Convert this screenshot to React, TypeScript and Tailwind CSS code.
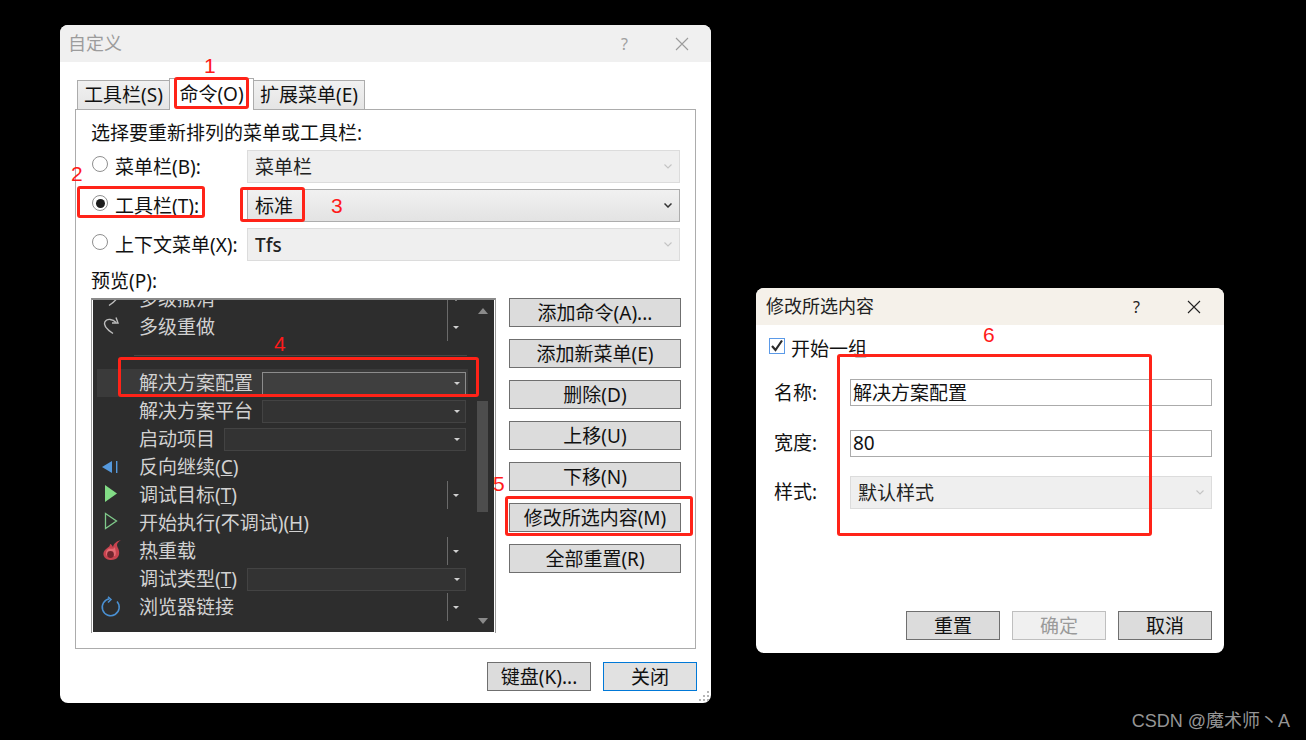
import type { ReactNode } from "react";

const redBox = "absolute border-[3px] border-[#ff2318] rounded-[3px] pointer-events-none z-20";
const redNum = "absolute text-[21px] leading-none text-[#ff1a1a] font-['Liberation_Sans',sans-serif] z-20";

function Chevron({ dim }: { dim?: boolean }) {
  return (
    <svg width="8" height="5" viewBox="0 0 8 5" fill="none">
      <path d="M0.5 0.5 L4 4 L7.5 0.5" stroke={dim ? "#c4c4c4" : "#333333"} strokeWidth={dim ? 1.1 : 1.5} />
    </svg>
  );
}

function Select({ text, enabled, bold }: { text: string; enabled?: boolean; bold?: boolean }) {
  return (
    <div
      className={`h-[33px] flex items-center justify-between pl-[7px] pr-[7px] border ${
        enabled
          ? "border-[#adadad] bg-gradient-to-b from-[#f1f1f1] to-[#e3e3e3] text-[#111]"
          : "border-[#dcdcdc] bg-[#efefef] text-[#222]"
      } ${bold ? "font-medium text-[#111]" : ""}`}
    >
      <span className="pt-[2px]">{text}</span>
      <Chevron dim={!enabled} />
    </div>
  );
}

function Radio({ checked }: { checked?: boolean }) {
  return (
    <span className="w-[16px] h-[16px] rounded-full border border-[#8f8f8f] bg-white flex items-center justify-center mb-[5px] ml-px shrink-0">
      {checked && <span className="w-[9px] h-[9px] rounded-full bg-[#1c1c1c]" />}
    </span>
  );
}

function OptionRow({ label, checked, select }: { label: string; checked?: boolean; select: ReactNode }) {
  return (
    <div className="grid grid-cols-[156px_433px] items-center">
      <div className="flex items-center">
        <Radio checked={checked} />
        <span className="ml-[7px] pt-[2px] whitespace-nowrap">{label}</span>
      </div>
      {select}
    </div>
  );
}

function Btn({ children, w = "w-[172px]", accent, off }: { children: ReactNode; w?: string; accent?: boolean; off?: boolean }) {
  return (
    <button
      className={`${w} h-[29px] pt-[2px] flex items-center justify-center border leading-none ${
        accent
          ? "border-[#0078d7] bg-[#e1e1e1] text-[#111]"
          : off
          ? "border-[#bfbfbf] bg-[#f0f0f0] text-[#9a9a9a]"
          : "border-[#6f6f6f] bg-[#dcdcdc] text-[#111]"
      }`}
    >
      {children}
    </button>
  );
}

const RedoIcon = () => (
  <svg width="22" height="22" viewBox="0 0 22 22" fill="none" stroke="#bdbdbd" strokeWidth="1.4">
    <path d="M16 6.5 C13 3 7 2 4.8 6 C3 9.5 7 13.5 13 17.5" />
    <path d="M16 1.5 L18 7 L12 7" />
  </svg>
);

const UndoIcon = () => (
  <svg width="22" height="22" viewBox="0 0 22 22" fill="none" stroke="#bdbdbd" strokeWidth="1.4">
    <path d="M6 6.5 C9 3 15 2 17.2 6 C19 9.5 15 13.5 9 17.5" />
    <path d="M6 1.5 L4 7 L10 7" />
  </svg>
);

const BackIcon = () => (
  <svg width="22" height="22" viewBox="0 0 22 22">
    <path d="M2 11 L12 5 L12 17 Z" fill="#5599dd" />
    <rect x="16" y="5" width="1.4" height="12" fill="#5599dd" />
  </svg>
);

const PlayIcon = () => (
  <svg width="22" height="22" viewBox="0 0 22 22">
    <path d="M5 1 L17 9.5 L5 18 Z" fill="#82dc86" />
  </svg>
);

const PlayOutlineIcon = () => (
  <svg width="22" height="22" viewBox="0 0 22 22" fill="none">
    <path d="M5.5 1.5 L16.5 9 L5.5 16.5 Z" stroke="#7fc98a" strokeWidth="1.3" />
  </svg>
);

const FlameIcon = () => (
  <svg width="22" height="22" viewBox="0 0 22 22">
    <path
      d="M21 0 C17 1 14 3 13 7 C12 5 11 4 10 4 C10 7 8 7 5 10 C2 13 3 19 10 20 C17 20.5 20 16 19 11 C18.5 8 17 7 17 5 C17 3 19 1 21 0 Z"
      fill="#c8434f"
    />
    <path d="M15 7 C14 9 12 9 9 8.5 C6 10 5 14 7 16 L15 16 C17 13 15 10 15 7 Z" fill="#e46a72" />
    <circle cx="10.5" cy="14.5" r="3.4" fill="#70262e" />
  </svg>
);

const RefreshIcon = () => (
  <svg width="22" height="22" viewBox="0 0 22 22" fill="none" stroke="#4a90d2" strokeWidth="1.5">
    <path d="M17 5.5 A8.5 8.5 0 1 1 9.5 2.8" />
    <path d="M8 0.8 L11 3.5 L8 6.5" />
  </svg>
);

type Row = {
  text: ReactNode;
  icon?: ReactNode;
  split?: boolean;
  combo?: string;
  active?: boolean;
  sep?: boolean;
};

const rows: Row[] = [
  { text: "多级撤消", icon: <UndoIcon />, split: true },
  { text: "多级重做", icon: <RedoIcon />, split: true },
  { text: "", sep: true },
  { text: "解决方案配置", combo: "w-[204px]", active: true },
  { text: "解决方案平台", combo: "w-[204px]" },
  { text: "启动项目", combo: "w-[242px]" },
  { text: <>反向继续(<u>C</u>)</>, icon: <BackIcon /> },
  { text: <>调试目标(<u>T</u>)</>, icon: <PlayIcon />, split: true },
  { text: <>开始执行(不调试)(<u>H</u>)</>, icon: <PlayOutlineIcon /> },
  { text: "热重载", icon: <FlameIcon />, split: true },
  { text: <>调试类型(<u>T</u>)</>, combo: "w-[219px]" },
  { text: "浏览器链接", icon: <RefreshIcon />, split: true },
];

function DropArrow() {
  return <span className="w-0 h-0 border-x-[3px] border-x-transparent border-t-[3px] border-t-[#d0d0d0]" />;
}

function ListRow({ row }: { row: Row }) {
  if (row.sep) {
    return (
      <div className="h-[28px] flex items-center pl-[37px] pr-px">
        <div className="h-px w-full bg-[#464646]" />
      </div>
    );
  }
  return (
    <div className={`h-[28px] flex items-center pr-[2px] whitespace-nowrap ${row.active ? "bg-[#3a3a3a]" : ""}`}>
      <div className="w-[22px] h-[22px] ml-[3px] mr-[17px] shrink-0">{row.icon}</div>
      <span>{row.text}</span>
      {row.split && (
        <div className="ml-auto w-[19px] h-[28px] border-l border-[#6a6a6a] flex items-center pl-[5px]">
          <DropArrow />
        </div>
      )}
      {row.combo && (
        <div
          className={`${row.combo} ml-auto h-[23px] flex items-center justify-end pr-[5px] border ${
            row.active ? "border-[#8c8c8c] bg-[#3f3f3f]" : "border-[#434343] bg-[#333333]"
          }`}
        >
          <DropArrow />
        </div>
      )}
    </div>
  );
}

function ScrollBar() {
  return (
    <div className="w-[11px] ml-[9px] flex flex-col items-center shrink-0">
      <span className="mt-[8px] w-0 h-0 border-x-[5px] border-x-transparent border-b-[6px] border-b-[#8a8a8a]" />
      <div className="mt-[87px] w-[11px] h-[111px] bg-[#4d4d4d]" />
      <span className="mt-[106px] w-0 h-0 border-x-[5px] border-x-transparent border-t-[6px] border-t-[#8a8a8a]" />
    </div>
  );
}

function Grip() {
  const dots = [
    [10, 0],
    [6, 4], [10, 4],
    [2, 8], [6, 8], [10, 8],
  ];
  return (
    <svg className="absolute right-[1px] bottom-[1px]" width="13" height="11" viewBox="0 0 13 11">
      {dots.map(([x, y]) => (
        <rect key={`${x}-${y}`} x={x} y={y} width="2" height="2" fill="#b5b5b5" />
      ))}
    </svg>
  );
}

function WinX({ color }: { color: string }) {
  return (
    <svg width="14" height="14" viewBox="0 0 14 14" fill="none" stroke={color} strokeWidth="1.1">
      <path d="M1 1 L13 13 M13 1 L1 13" />
    </svg>
  );
}

function Tab({ children, active, w }: { children: ReactNode; active?: boolean; w: string }) {
  return active ? (
    <div className={`${w} h-[32px] border border-b-0 border-[#acacac] bg-white flex items-center justify-center relative z-10`}>
      {children}
    </div>
  ) : (
    <div className={`${w} h-[30px] border border-[#acacac] bg-gradient-to-b from-[#f1f1f1] to-[#e5e5e5] flex items-center justify-center whitespace-nowrap`}>
      {children}
    </div>
  );
}

function CustomizeDialog() {
  return (
    <div className="absolute left-[60px] top-[25px] w-[651px] h-[678px] bg-white rounded-[8px] overflow-hidden">
      <div className="h-[37px] bg-[#f0f0f0] flex items-center pl-[8px] text-[18px] text-[#9c9c9c]">
        <span>自定义</span>
        <span className="ml-auto mr-[47px] text-[16px] text-[#a0a0a0]">?</span>
        <div className="mr-[22px]">
          <WinX color="#9c9c9c" />
        </div>
      </div>

      <div className="flex items-end ml-[17px] mt-[16px] -mb-px relative z-10">
        <Tab w="w-[93px]">工具栏(S)</Tab>
        <div className="-ml-px">
          <Tab active w="w-[85px]">命令(O)</Tab>
        </div>
        <div className="-ml-px">
          <Tab w="w-[112px]">扩展菜单(E)</Tab>
        </div>
      </div>

      <div className="ml-[15px] w-[621px] h-[540px] border border-[#acacac] pl-[15px] pt-[11px]">
        <div className="leading-[24px] text-[#111]">选择要重新排列的菜单或工具栏:</div>
        <div className="flex flex-col gap-[6px] mt-[5px]">
          <OptionRow label="菜单栏(B):" select={<Select text="菜单栏" />} />
          <OptionRow label="工具栏(T):" checked select={<Select text="标准" enabled />} />
          <OptionRow label="上下文菜单(X):" select={<Select text="Tfs" bold />} />
        </div>
        <div className="leading-[24px] mt-[8px]">预览(P):</div>

        <div className="flex mt-[5px]">
          <div className="w-[405px] h-[335px] border-x border-t-2 border-[#8a8a8a] border-x-[#9a9a9a] pl-px pr-px">
            <div className="h-[332px] bg-[#2d2d2d] flex overflow-hidden text-[#d2d2d2]">
              <div className="w-[375px] pl-[4px] shrink-0 -mt-[15px] h-[350px]">
                {rows.map((row, i) => (
                  <ListRow key={i} row={row} />
                ))}
              </div>
              <ScrollBar />
            </div>
          </div>

          <div className="ml-[13px] flex flex-col gap-[12px]">
            <Btn>添加命令(A)...</Btn>
            <Btn>添加新菜单(E)</Btn>
            <Btn>删除(D)</Btn>
            <Btn>上移(U)</Btn>
            <Btn>下移(N)</Btn>
            <Btn>修改所选内容(M)</Btn>
            <Btn>全部重置(R)</Btn>
          </div>
        </div>
      </div>

      <div className="flex justify-end gap-[12px] mt-[13px] pr-[14px]">
        <Btn w="w-[104px]">键盘(K)...</Btn>
        <Btn w="w-[94px]" accent>关闭</Btn>
      </div>
      <Grip />
    </div>
  );
}

function ModifyDialog() {
  return (
    <div className="absolute left-[756px] top-[288px] w-[468px] h-[365px] bg-white rounded-[8px] overflow-hidden flex flex-col">
      <div className="h-[37px] shrink-0 bg-[#f5f1ea] flex items-center pl-[10px] text-[18px] text-[#222]">
        <span>修改所选内容</span>
        <span className="ml-auto mr-[47px] text-[16px]">?</span>
        <div className="mr-[23px]">
          <WinX color="#222222" />
        </div>
      </div>

      <div className="flex items-start pl-[13px] pt-[12px]">
        <span className="w-[16px] h-[16px] mt-px border border-[#5b9ae8] flex items-center justify-center bg-white">
          <svg width="14" height="14" viewBox="0 0 14 14" fill="none">
            <path d="M2 7 L5.5 11 L12 1.5" stroke="#2b2b2b" strokeWidth="2.2" />
          </svg>
        </span>
        <span className="ml-[6px] leading-[24px]">开始一组</span>
      </div>

      <div className="grid grid-cols-[76px_362px] items-center pl-[18px] mt-[18px] gap-y-[24px]">
        <span className="leading-none pt-[2px]">名称:</span>
        <div className="h-[27px] border border-[#ababab] flex items-center pl-[2px] pt-[2px]">解决方案配置</div>
        <span className="leading-none">宽度:</span>
        <div className="h-[27px] border border-[#ababab] flex items-center pl-[2px]">80</div>
        <span className="leading-none -mt-[5px]">样式:</span>
        <div className="-mt-[5px]">
          <Select text="默认样式" />
        </div>
      </div>

      <div className="mt-auto mb-[13px] flex justify-end gap-[12px] pr-[12px]">
        <Btn w="w-[94px]">重置</Btn>
        <Btn w="w-[94px]" off>确定</Btn>
        <Btn w="w-[94px]">取消</Btn>
      </div>
    </div>
  );
}

export default function App() {
  return (
    <div className="relative w-[1306px] h-[740px] bg-black overflow-hidden text-[19px] text-[#111] font-['Noto_Sans','Noto_Sans_CJK_SC',sans-serif]">
      <CustomizeDialog />
      <ModifyDialog />

      <div className={`${redBox} left-[174px] top-[77px] w-[75px] h-[32px]`} />
      <div className={`${redBox} left-[77px] top-[186px] w-[128px] h-[32px]`} />
      <div className={`${redBox} left-[240px] top-[187px] w-[65px] h-[35px]`} />
      <div className={`${redBox} left-[118px] top-[357px] w-[361px] h-[40px]`} />
      <div className={`${redBox} left-[505px] top-[496px] w-[188px] h-[40px]`} />
      <div className={`${redBox} left-[837px] top-[354px] w-[315px] h-[182px]`} />

      <span className={`${redNum} left-[204px] top-[55px]`}>1</span>
      <span className={`${redNum} left-[71px] top-[163px]`}>2</span>
      <span className={`${redNum} left-[331px] top-[195px]`}>3</span>
      <span className={`${redNum} left-[274px] top-[333px]`}>4</span>
      <span className={`${redNum} left-[493px] top-[473px]`}>5</span>
      <span className={`${redNum} left-[983px] top-[324px]`}>6</span>

      <span className="absolute right-[16px] top-[711px] text-[18px] leading-[20px] text-[#959595] font-['Liberation_Sans','Noto_Sans_CJK_SC',sans-serif]">CSDN @魔术师丶A</span>
    </div>
  );
}
